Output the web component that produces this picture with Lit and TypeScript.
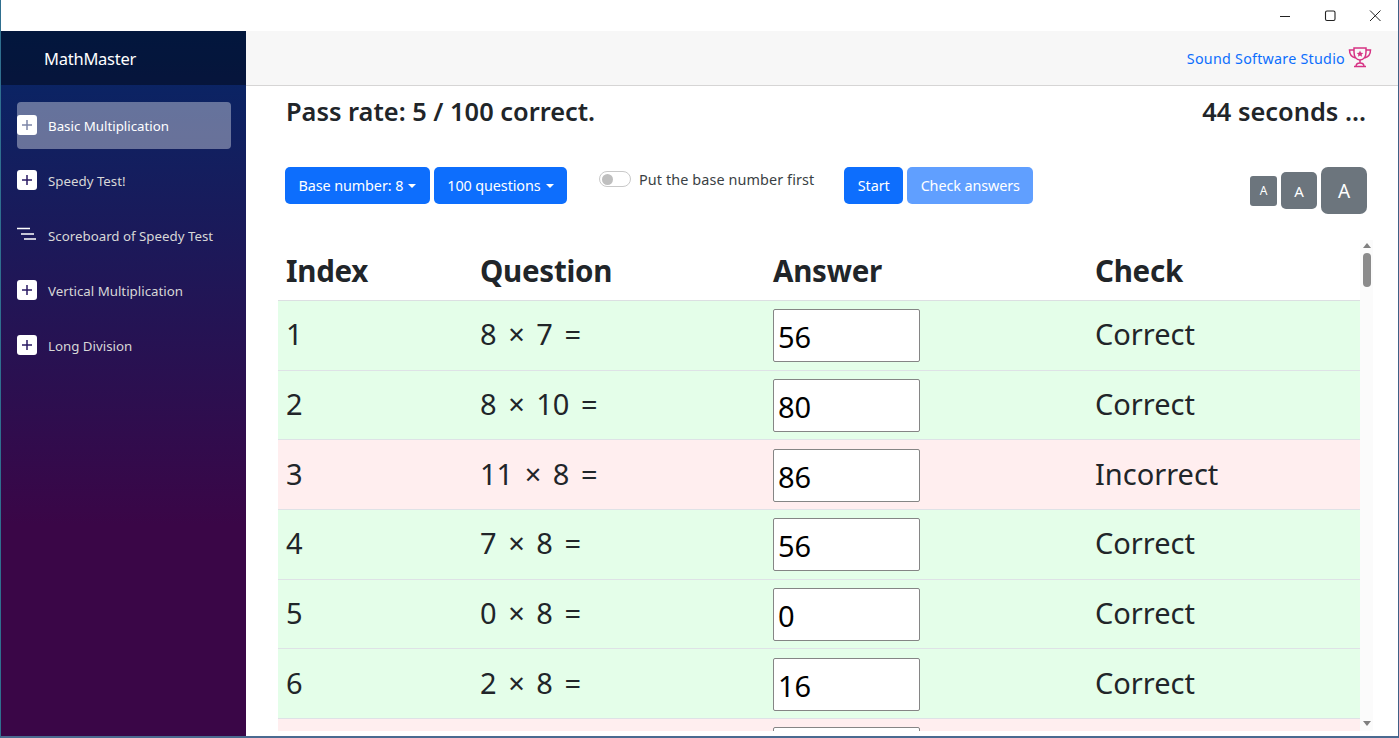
import { LitElement, html, css } from "lit";
import { customElement } from "lit/decorators.js";

const plus = html`<svg class="ico" viewBox="0 0 20 20"><rect x="0" y="0" width="20" height="20" rx="3" fill="#fff"></rect><path d="M10 5v10M5 10h10" stroke="currentColor" stroke-width="1.5" fill="none"></path></svg>`;
const nested = html`<svg class="ico" viewBox="0 0 20 20"><path d="M0 3.500h13M4 9h13M7 14h12" stroke="#fff" stroke-width="1.400" fill="none"></path></svg>`;

const NAV = [
  { label: "Basic Multiplication", icon: plus, active: true },
  { label: "Speedy Test!", icon: plus },
  { label: "Scoreboard of Speedy Test", icon: nested },
  { label: "Vertical Multiplication", icon: plus },
  { label: "Long Division", icon: plus },
];

const ROWS = [
  ["1", "8 × 7 =", "56", "Correct", true],
  ["2", "8 × 10 =", "80", "Correct", true],
  ["3", "11 × 8 =", "86", "Incorrect", false],
  ["4", "7 × 8 =", "56", "Correct", true],
  ["5", "0 × 8 =", "0", "Correct", true],
  ["6", "2 × 8 =", "16", "Correct", true],
  ["", "", "", "", false],
] as const;

@customElement("app-root")
export class AppRoot extends LitElement {
  static styles = css`
    :host { display: flex; flex-direction: column; width: 1399px; height: 738px; overflow: hidden; background: #fff; font-family: "Noto Sans", "Open Sans", sans-serif; color: #212529; box-sizing: border-box; border-right: 1px solid #3f5f86; border-left: 1px solid #2f6f8f; border-bottom: 2px solid #4a6a90; }
    * { box-sizing: border-box; }
    .titlebar { height: 31px; flex: none; display: flex; justify-content: flex-end; align-items: center; background: #fff; padding-right: 15px; gap: 30px; }
    .titlebar svg { width: 15px; height: 15px; display: block; margin-top: -1px; }
    .main { flex: 1; display: flex; min-height: 0; }
    .side { width: 245px; flex: none; display: flex; flex-direction: column; background: linear-gradient(180deg, #052767 0%, #3a0647 70%); }
    .brand { height: 54px; flex: none; display: flex; align-items: center; padding-left: 43px; color: #fff; background: rgba(0,0,0,.4); font-size: 16.500px; letter-spacing: -.25px; }
    .nav { display: flex; flex-direction: column; padding: 17px 16px 0; gap: 8px; }
    .item { height: 47px; border-radius: 4px; display: flex; align-items: center; gap: 11px; width: 214px; color: #d7d7d7; font-size: 13.300px; }
    .item.active { background: rgba(255,255,255,.37); color: #fff; }
    .ico { width: 20px; height: 20px; flex: none; color: #2a1a63; display: block; margin-top: -2px; }
    .item.active .ico { color: #7d86a8; }
    .content { flex: 1; min-width: 0; display: flex; flex-direction: column; }
    .top { height: 55px; flex: none; background: #f7f7f7; border-bottom: 1px solid #d6d5d5; display: flex; justify-content: flex-end; align-items: center; gap: 3px; padding-right: 26px; }
    .top a { color: #0d6efd; font-size: 14.300px; letter-spacing: .25px; }
    .top svg { width: 24px; height: 22px; display: block; margin-top: -2px; }
    .status { flex: none; display: flex; justify-content: space-between; padding: 6px 32px 0 40px; height: 81px; font-size: 25.400px; font-weight: 600; line-height: 38px; }
    .bar { flex: none; height: 47px; display: flex; align-items: flex-start; padding: 0 31px 0 39px; }
    .btn { height: 37px; border: none; border-radius: 5px; background: #0d6efd; color: #fff; font: inherit; font-size: 14.400px; letter-spacing: -.1px; padding: 0 13.500px; display: flex; align-items: center; margin-right: 4px; white-space: nowrap; }
    .btn.off { background: #609fff; }
    .caret { width: 0; height: 0; margin-left: 5px; border-left: 4px solid transparent; border-right: 4px solid transparent; border-top: 4px solid #fff; }
    .toggle { display: flex; align-items: center; gap: 8px; margin: 0 30px 0 28px; height: 24px; font-size: 14.400px; letter-spacing: .1px; color: #3a3f44; }
    .sw { width: 32px; height: 16px; border: 1px solid #c9c9c9; border-radius: 8px; padding: 2px; background: #fff; flex: none; }
    .sw i { display: block; border-radius: 6px; background: #bfbfbf; width: 11px; height: 11px; margin-top: -.5px; }
    .sizes { margin-left: auto; display: flex; align-items: center; gap: 4px; height: 47px; }
    .sz { background: #6c757d; color: #fff; display: flex; align-items: center; justify-content: center; }
    .s1 { width: 27px; height: 30px; font-size: 12px; border-radius: 3px; }
    .s2 { width: 36px; height: 37px; font-size: 15px; border-radius: 5px; }
    .s3 { width: 46px; height: 47px; font-size: 19px; border-radius: 7px; }
    .tablewrap { flex: 1; min-height: 0; display: flex; margin: 26px 24px 5px 32px; overflow: hidden; }
    .table { width: 1082px; flex: none; overflow: hidden; }
    .row { display: grid; grid-template-columns: 194px 293px 322px 1fr; height: 69.670px; align-items: center; font-size: 29px; border-bottom: 1px solid #dee2e6; }
    .row > div { padding: 0 0 3px 8px; }
    .row > .q { word-spacing: 4px; }
    .row > .a { padding: 1px 0 0 8px; }
    .row.head { height: 61px; font-weight: 700; font-size: 29.500px; border-bottom: 1px solid #dcdfe2; letter-spacing: -.25px; }
    .row.head > div { padding: 0 0 0 8px; }
    .row.ok { background: #e4fee9; }
    .row.bad { background: #ffeeef; }
    .answer { width: 147px; height: 53px; border: 1px solid #858585; border-radius: 2px; background: #fff; color: #000; font: inherit; padding: 2px 0 0 4px; display: block; }
    .sb { width: 13px; flex: none; background: #fbfbfb; display: flex; flex-direction: column; align-items: center; }
    .sb .up { margin-top: 3px; width: 0; height: 0; border-left: 4.500px solid transparent; border-right: 4.500px solid transparent; border-bottom: 5px solid #7f7f7f; }
    .sb .th { width: 8px; height: 34px; margin-top: 5px; border-radius: 4px; background: #8b8b8b; }
    .sb .dn { margin-top: auto; margin-bottom: 5px; width: 0; height: 0; border-left: 4.500px solid transparent; border-right: 4.500px solid transparent; border-top: 5px solid #7f7f7f; }
  `;

  render() {
    return html`
      <div class="titlebar">
        <svg viewBox="0 0 15 15"><path d="M2 8.500h10" stroke="#222" stroke-width="1" fill="none"></path></svg>
        <svg viewBox="0 0 15 15"><rect x="2.500" y="3" width="9.500" height="9.500" rx="1.500" stroke="#222" stroke-width="1.100" fill="none"></rect></svg>
        <svg viewBox="0 0 15 15"><path d="M2 2.500l10.500 10.500M12.500 2.500L2 13" stroke="#222" stroke-width="1" fill="none"></path></svg>
      </div>
      <div class="main">
        <aside class="side">
          <div class="brand">MathMaster</div>
          <nav class="nav">
            ${NAV.map((n) => html`<div class="item ${n.active ? "active" : ""}">${n.icon}<span>${n.label}</span></div>`)}
          </nav>
        </aside>
        <section class="content">
          <header class="top">
            <a>Sound Software Studio</a>
            <svg viewBox="0 0 24 22" fill="none" stroke="#d63384" stroke-width="1.500">
              <path d="M6 2h12v4c0 5-2.500 8-6 8s-6-3-6-8z"></path>
              <path d="M6 4H1.500c0 4 2 7 6 8M18 4h4.500c0 4-2 7-6 8"></path>
              <path d="M12 14v3M8 20.500c0-2 1.500-3.500 4-3.500s4 1.500 4 3.500zM6 20.500h12"></path>
              <path d="M12 4.500l1 2.200 2.300.2-1.700 1.600.5 2.300-2.100-1.200-2.100 1.200.5-2.300-1.700-1.600 2.300-.2z" fill="#d63384" stroke="none"></path>
            </svg>
          </header>
          <div class="status"><span>Pass rate: 5 / 100 correct.</span><span>44 seconds ...</span></div>
          <div class="bar">
            <button class="btn">Base number: 8<span class="caret"></span></button>
            <button class="btn">100 questions<span class="caret"></span></button>
            <div class="toggle"><span class="sw"><i></i></span><span>Put the base number first</span></div>
            <button class="btn">Start</button>
            <button class="btn off">Check answers</button>
            <div class="sizes"><span class="sz s1">A</span><span class="sz s2">A</span><span class="sz s3">A</span></div>
          </div>
          <div class="tablewrap">
            <div class="table">
              <div class="row head"><div>Index</div><div>Question</div><div>Answer</div><div>Check</div></div>
              ${ROWS.map((r) => html`<div class="row ${r[4] ? "ok" : "bad"}"><div>${r[0]}</div><div class="q">${r[1]}</div><div class="a"><input class="answer" .value=${r[2]} /></div><div>${r[3]}</div></div>`)}
            </div>
            <div class="sb"><span class="up"></span><span class="th"></span><span class="dn"></span></div>
          </div>
        </section>
      </div>
    `;
  }
}
